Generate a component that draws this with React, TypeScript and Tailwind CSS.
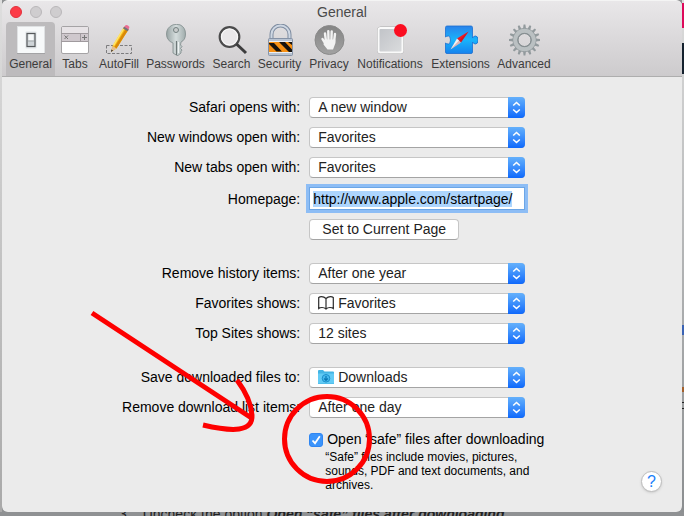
import React, { useEffect, useRef } from 'react';

interface ToolbarItem {
  name: string;
  width: string;
  icon: React.ReactNode;
}

interface PopupProps {
  id: string;
  label: string;
  options: string[];
  icon?: React.ReactNode;
}

const GeneralIcon = () => (
  <svg width="32" height="32" viewBox="0 0 32 32">
    <rect x="2.5" y="2.5" width="27" height="27" fill="#f7f9fa" stroke="#dfe1e3" />
    <path d="M2 29.5h28" stroke="#a3a3a5" />
    <rect x="10.500" y="7.500" width="11" height="17" rx="1" fill="#dfe3e6" />
    <rect x="12" y="9.500" width="8" height="13" fill="#cfd4d8" stroke="#56595c" strokeWidth="1.200" />
    <rect x="13.500" y="10.500" width="5" height="6" fill="#f5f7f8" />
    <path d="M13 17h6" stroke="#a2a7aa" />
  </svg>
);

const TabsIcon = () => (
  <svg width="32" height="32" viewBox="0 0 32 32">
    <rect x="2.5" y="2.5" width="27" height="27" rx="1.5" fill="#fff" stroke="#a5a3a5" />
    <rect x="3" y="3" width="26" height="6" fill="#e7e3e6" />
    <rect x="3" y="9" width="26" height="8" fill="#cfc8cd" />
    <path d="M2 9.5h27M2 17.5h27M21.500 9v8" stroke="#a09a9e" />
    <path d="M5.500 11.500l3.500 3.500M9 11.500l-3.500 3.500M23 13.500h5M25.500 11v5" stroke="#777" strokeWidth="1" />
  </svg>
);

const AutoFillIcon = () => (
  <svg width="32" height="32" viewBox="0 0 32 32">
    <rect x="3.500" y="21.500" width="25" height="8" fill="none" stroke="#7c7c7e" strokeDasharray="3 1.500" />
    <path d="M8 28l1.500-6L21 3l4.500 2.500-12 19z" fill="#f7b916" />
    <path d="M11.500 23L23 4.500l2.500 1-12 19z" fill="#d98908" />
    <path d="M10.500 21.500L21 4" stroke="#ffe46a" strokeWidth="1.500" />
    <path d="M8 28l1.500-6 4 2.500z" fill="#e2bd91" />
    <path d="M8 28l.5-2.500 1.500 1z" fill="#222" />
    <path d="M20.500 3.800l1.700-2.300q2-1.500 4.300 1.500l-1.300 3.200z" fill="#ec6c92" />
    <path d="M20 4.500l1.200-1.800 4.500 2.700-1 1.800z" fill="#737478" />
  </svg>
);

const PasswordsIcon = () => (
  <svg width="32" height="32" viewBox="0 0 32 32">
    <defs>
      <linearGradient id="key" x1="0" x2="1">
        <stop stopColor="#98a4a4" />
        <stop offset=".5" stopColor="#d5dddd" />
        <stop offset="1" stopColor="#a0acac" />
      </linearGradient>
    </defs>
    <path
      d="M13 .8q3.500-.8 7 0 5.500 2.500 5.500 9.200 0 6-4.500 8l-.5 3 1.500 1.500-1.500 2 1.500 1.500-1 1.500v1.500L18 31.500h-1L13 29V19q-6.500-2.500-6.500-9 0-6.500 6.500-9.200z"
      fill="url(#key)"
      stroke="#7f8b8b"
      strokeWidth=".8"
    />
    <circle cx="16" cy="6" r="2.500" fill="#c9cccc" stroke="#748080" />
    <path d="M16.500 17v14" stroke="#6e7878" strokeWidth="1.200" />
    <path d="M18.500 18v11" stroke="#f0f4f4" />
  </svg>
);

const SearchIcon = () => (
  <svg width="32" height="32" viewBox="0 0 32 32">
    <circle cx="13.500" cy="13" r="9.800" fill="#e9e7e9" stroke="#4b4b4c" strokeWidth="2.200" />
    <circle cx="13.500" cy="13" r="8" fill="none" stroke="#fafafa" strokeWidth="1" />
    <path d="M20.500 20L30 29" stroke="#3c3c3d" strokeWidth="3" />
  </svg>
);

const SecurityIcon = () => (
  <svg width="32" height="32" viewBox="0 0 32 32">
    <path d="M7.500 15v-4.500a9 9 0 0 1 18 0V15" fill="none" stroke="#7f8da1" strokeWidth="4" />
    <path d="M7.500 15v-4.500a9 9 0 0 1 18 0V15" fill="none" stroke="#ced7e3" strokeWidth="2" />
    <rect x="4.500" y="14.500" width="24" height="17" rx="1" fill="#b8c3d2" stroke="#8592a6" />
    <rect x="5" y="18" width="23" height="10" fill="#f79013" />
    <path d="M5 19h5l8 8.500h-5.500L5 20zM15 18h6l7 7.500V28h-3zM24 18h4v3z" fill="#17130e" />
    <path d="M5 17.500h23M5 28.500h23" stroke="#e9eef4" />
  </svg>
);

const PrivacyIcon = () => (
  <svg width="32" height="32" viewBox="0 0 32 32">
    <defs>
      <linearGradient id="privacy" y2="1" x2="0">
        <stop stopColor="#848484" />
        <stop offset="1" stopColor="#a2a2a2" />
      </linearGradient>
    </defs>
    <circle cx="16.500" cy="16" r="14.500" fill="url(#privacy)" stroke="#8a8a8a" />
    <g stroke="#f2f2f2" strokeWidth="2.400" strokeLinecap="round">
      <path d="M12 9.500l1 8M15.300 7.300l.2 9M18.700 7.500l-.3 9M22 10l-1 8M9.500 15l3 5" />
    </g>
    <path d="M11.800 15.500h10.500q1 4-1.300 7.500l-1 2.500h-5.500l-4-5z" fill="#f2f2f2" />
  </svg>
);

const NotificationsIcon = () => (
  <svg width="32" height="32" viewBox="0 0 32 32" className="overflow-visible">
    <defs>
      <linearGradient id="note" x2="1" y2="1">
        <stop stopColor="#bfc2c6" />
        <stop offset="1" stopColor="#dcdddf" />
      </linearGradient>
    </defs>
    <rect x="3.500" y="3" width="26" height="26.500" rx="3" fill="url(#note)" stroke="#aaa" strokeWidth="1" />
    <rect x="4.500" y="4" width="24" height="24.500" rx="2" fill="none" stroke="#fafafa" strokeWidth="2" />
    <circle cx="26.500" cy="6.500" r="6.500" fill="#fb0d20" />
  </svg>
);

const ExtensionsIcon = () => (
  <svg width="34" height="32" viewBox="0 0 34 32">
    <defs>
      <linearGradient id="puzzle" x2="0" y2="1">
        <stop stopColor="#2a82ea" />
        <stop offset=".5" stopColor="#19b4fb" />
        <stop offset="1" stopColor="#1683ee" />
      </linearGradient>
    </defs>
    <path
      d="M3 2h24q1.500 0 1.500 1.500V14q1-2 3-2 2.500 0 2.500 4t-2.500 4q-2 0-3-2v10q0 1.500-1.500 1.500H3q-1.500 0-1.500-1.500V19q1 1 3 1 2-.5 2-4t-2-4q-2 0-3 1V3.500Q1.500 2 3 2z"
      fill="url(#puzzle)"
      stroke="#1a6fd0"
      strokeWidth=".8"
    />
    <path d="M24.500 7.500L13 14.500l4 4z" fill="#ee1b25" />
    <path d="M6.500 25.500L13 14.500l4 4z" fill="#f2f2f2" />
    <path d="M24.500 7.500L17 18.500 6.500 25.500l8.500-9z" fill="#900" opacity=".25" />
  </svg>
);

const AdvancedIcon = () => (
  <svg width="32" height="32" viewBox="0 0 32 32">
    <g fill="#929a9d">
      {Array.from({ length: 16 }, (_, i) => (
        <path key={i} d="M15 5l.6-4.500h1.800L18 5z" transform={`rotate(${i * 22.5} 16.500 16)`} />
      ))}
    </g>
    <circle cx="16.500" cy="16" r="9.200" fill="none" stroke="#929a9d" strokeWidth="5.500" />
    <circle cx="16.500" cy="16" r="9.300" fill="none" stroke="#bac0c2" strokeWidth="4" />
    <circle cx="16.500" cy="16" r="6.500" fill="none" stroke="#7f888b" strokeWidth="1" />
  </svg>
);

const BookIcon = () => (
  <svg width="16" height="14" viewBox="0 0 16 14" fill="none" stroke="#2b2b2b" strokeWidth="1.200">
    <path d="M8 2.500Q6 .6 3.500.6 1.800.6.700 1.500v11Q2 11.500 4 11.500q2.500 0 4 1.500 1.500-1.500 4-1.500 2 0 3.300 1v-11Q14.200.6 12.500.6 10 .6 8 2.500zM8 2.500V13" />
  </svg>
);

const FolderIcon = () => (
  <svg width="16" height="14" viewBox="0 0 16 14">
    <path d="M0 1q0-1 1-1h4l1.500 1.500H15q1 0 1 1V14H0z" fill="#43b4e4" />
    <path d="M0 3.500h16V13.500H0z" fill="#62cbf5" />
    <circle cx="8" cy="8.300" r="3.800" fill="#47b9ee" stroke="#1a8fca" />
    <path d="M8 6v4M6.200 8.500L8 10.300l1.800-1.800" fill="none" stroke="#0878b4" strokeWidth="1.200" />
  </svg>
);

const toolbar: ToolbarItem[] = [
  { name: 'General', width: 'w-[49px]', icon: <GeneralIcon /> },
  { name: 'Tabs', width: 'w-[40px]', icon: <TabsIcon /> },
  { name: 'AutoFill', width: 'w-[48px]', icon: <AutoFillIcon /> },
  { name: 'Passwords', width: 'w-[65px]', icon: <PasswordsIcon /> },
  { name: 'Search', width: 'w-[47px]', icon: <SearchIcon /> },
  { name: 'Security', width: 'w-[49px]', icon: <SecurityIcon /> },
  { name: 'Privacy', width: 'w-[50px]', icon: <PrivacyIcon /> },
  { name: 'Notifications', width: 'w-[72px]', icon: <NotificationsIcon /> },
  { name: 'Extensions', width: 'w-[69px]', icon: <ExtensionsIcon /> },
  { name: 'Advanced', width: 'w-[58px]', icon: <AdvancedIcon /> },
];

const Popup: React.FC<PopupProps> = ({ id, label, options, icon }) => (
  <>
    <label htmlFor={id} className="text-right">{label}</label>
    <div className="relative w-[216px]">
      <select
        id={id}
        className={`block h-[21px] w-full appearance-none rounded border border-[#c6c6c6] border-b-[#a4a4a4] bg-white pr-5 leading-[19px] text-[#222] outline-none ${icon ? 'pl-7' : 'pl-2'}`}
      >
        {options.map((option) => <option key={option}>{option}</option>)}
      </select>
      {icon && <span className="pointer-events-none absolute top-[3px] left-[9px]">{icon}</span>}
      <span className="pointer-events-none absolute inset-y-0 right-0 flex w-[17px] items-center justify-center rounded-r bg-linear-to-b from-[#64b0fb] to-[#0d68fb]">
        <svg width="9" height="13" viewBox="0 0 9 13" fill="none" stroke="#fff" strokeWidth="1.600">
          <path d="M1.200 4.500l3.300-3 3.300 3M1.200 8.500l3.300 3 3.300-3" />
        </svg>
      </span>
    </div>
  </>
);

const Toolbar = () => (
  <header className="border-b border-[#aeaeae] bg-linear-to-b from-[#e9e7e9] to-[#cdcbcd]">
    <div className="grid h-[21px] grid-cols-[1fr_auto_1fr] items-center px-2">
      <div className="flex gap-2">
        <button aria-label="Close" className="size-3 rounded-full border border-[#e2303c] bg-[#fc3b47]" />
        <button aria-label="Minimize" className="size-3 rounded-full border border-[#b9b7b9] bg-[#cfcdcf]" />
        <button aria-label="Zoom" className="size-3 rounded-full border border-[#b9b7b9] bg-[#cfcdcf]" />
      </div>
      <h1 className="text-sm text-[#4a4a4a]">General</h1>
    </div>
    <nav className="flex px-1">
      {toolbar.map((item) => (
        <button
          key={item.name}
          className={`flex h-[54px] flex-col items-center rounded-t pt-[2px] text-xs text-[#3c3c3c] ${item.width} ${item.name === 'General' ? 'bg-[#bdbbbd]' : ''}`}
        >
          {item.icon}
          {item.name}
        </button>
      ))}
    </nav>
  </header>
);

const Preferences = () => {
  const homepage = useRef<HTMLInputElement>(null);

  useEffect(() => {
    homepage.current?.focus();
    homepage.current?.select();
  }, []);

  return (
    <form className="grid grid-cols-[4fr_5fr] items-center gap-[9px] py-5 leading-[21px]">
      <Popup id="opens" label="Safari opens with:" options={['A new window', 'A new private window']} />
      <Popup id="windows" label="New windows open with:" options={['Favorites', 'Homepage', 'Empty Page']} />
      <Popup id="tabs" label="New tabs open with:" options={['Favorites', 'Homepage', 'Empty Page']} />

      <label htmlFor="homepage" className="pt-[2px] text-right">Homepage:</label>
      <input
        ref={homepage}
        id="homepage"
        type="text"
        defaultValue="http://www.apple.com/startpage/"
        className="h-[23px] w-[216px] border border-[#6ca6e6] bg-white px-[3px] pt-px ring-3 ring-[#8dbdf5] outline-none selection:bg-[#add5fd] selection:text-black"
      />

      <button
        type="button"
        className="col-start-2 h-[21px] w-[150px] rounded border border-[#c6c6c6] border-b-[#a4a4a4] bg-white leading-[19px] text-[#222]"
      >
        Set to Current Page
      </button>

      <div className="col-span-2 h-[5px]" />
      <Popup id="history" label="Remove history items:" options={['After one year', 'After one month', 'Manually']} />
      <Popup id="favorites" label="Favorites shows:" options={['Favorites', 'Bookmarks']} icon={<BookIcon />} />
      <Popup id="sites" label="Top Sites shows:" options={['12 sites', '6 sites', '24 sites']} />

      <div className="col-span-2 h-[5px]" />
      <Popup id="save" label="Save downloaded files to:" options={['Downloads', 'Other…']} icon={<FolderIcon />} />
      <Popup id="remove" label="Remove download list items:" options={['After one day', 'Manually']} />

      <div className="col-start-2 flex items-end justify-between pt-[2px] pr-5">
        <div>
          <div className="flex items-center gap-1">
            <span className="relative flex">
              <input
                id="safe"
                type="checkbox"
                defaultChecked
                className="peer size-[14px] appearance-none rounded-[3px] border border-[#aaa] bg-white checked:border-[#2f86f2] checked:bg-[#3b94fb]"
              />
              <svg className="pointer-events-none absolute inset-0 hidden peer-checked:block" width="14" height="14" viewBox="0 0 14 14" fill="none" stroke="#fff" strokeWidth="1.800">
                <path d="M3.500 7.500L6 10.200l4.800-7" />
              </svg>
            </span>
            <label htmlFor="safe">Open “safe” files after downloading</label>
          </div>
          <p className="w-[228px] pl-4 text-xs leading-[14px]">
            “Safe” files include movies, pictures, sounds, PDF and text documents, and archives.
          </p>
        </div>
        <button
          type="button"
          aria-label="Help"
          className="size-[21px] rounded-full border border-[#bdbdbd] bg-white text-base leading-[19px] text-[#1a80fa] shadow-sm"
        >
          ?
        </button>
      </div>
    </form>
  );
};

const Annotation = () => (
  <svg className="pointer-events-none absolute top-0 left-0" width="684" height="516" viewBox="0 0 684 516" fill="none" stroke="#fe0000" strokeWidth="5">
    <path d="M92 313L253 419M237 380Q251 399 252 415C253 432 233 432 203 425" />
    <circle cx="327" cy="439" r="42.500" />
  </svg>
);

const RightEdge = () => (
  <div className="w-[2px] shrink-0 bg-linear-to-b from-[#dcdcdc] to-[#8b8e90] pt-[3px]">
    <div className="h-[25px] bg-[#dd0a5a]" />
    <div className="mt-[15px] h-[31px] bg-[#14212e]" />
    <div className="mt-[251px] h-[10px] bg-[#3a63b4]" />
    <div className="mt-[52px] h-[5px] bg-[#a4602c]" />
    <div className="mt-[10px] h-[7px] border-y border-[#222]" />
  </div>
);

const App = () => (
  <div className="relative min-h-screen overflow-hidden bg-[#8f9193] font-['Liberation_Sans',Arial,sans-serif] text-sm text-black">
    <div className="flex">
      <div className="w-[2px] shrink-0 bg-linear-to-b from-[#dedede] to-[#a9a9a9]" />
      <main className="grow overflow-hidden rounded-md border-t border-[#f4f4f4] bg-[#ebebeb]">
        <Toolbar />
        <Preferences />
      </main>
      <RightEdge />
    </div>
    {/* page text peeking out below the window */}
    <div className="flex h-1 items-center gap-3 overflow-hidden px-[119px] text-[#222]">
      <span>3.</span>
      <p className="whitespace-nowrap">
        Uncheck the option <b><i>Open “safe” files after downloading</i></b>
      </p>
    </div>
    <Annotation />
  </div>
);

export default App;
